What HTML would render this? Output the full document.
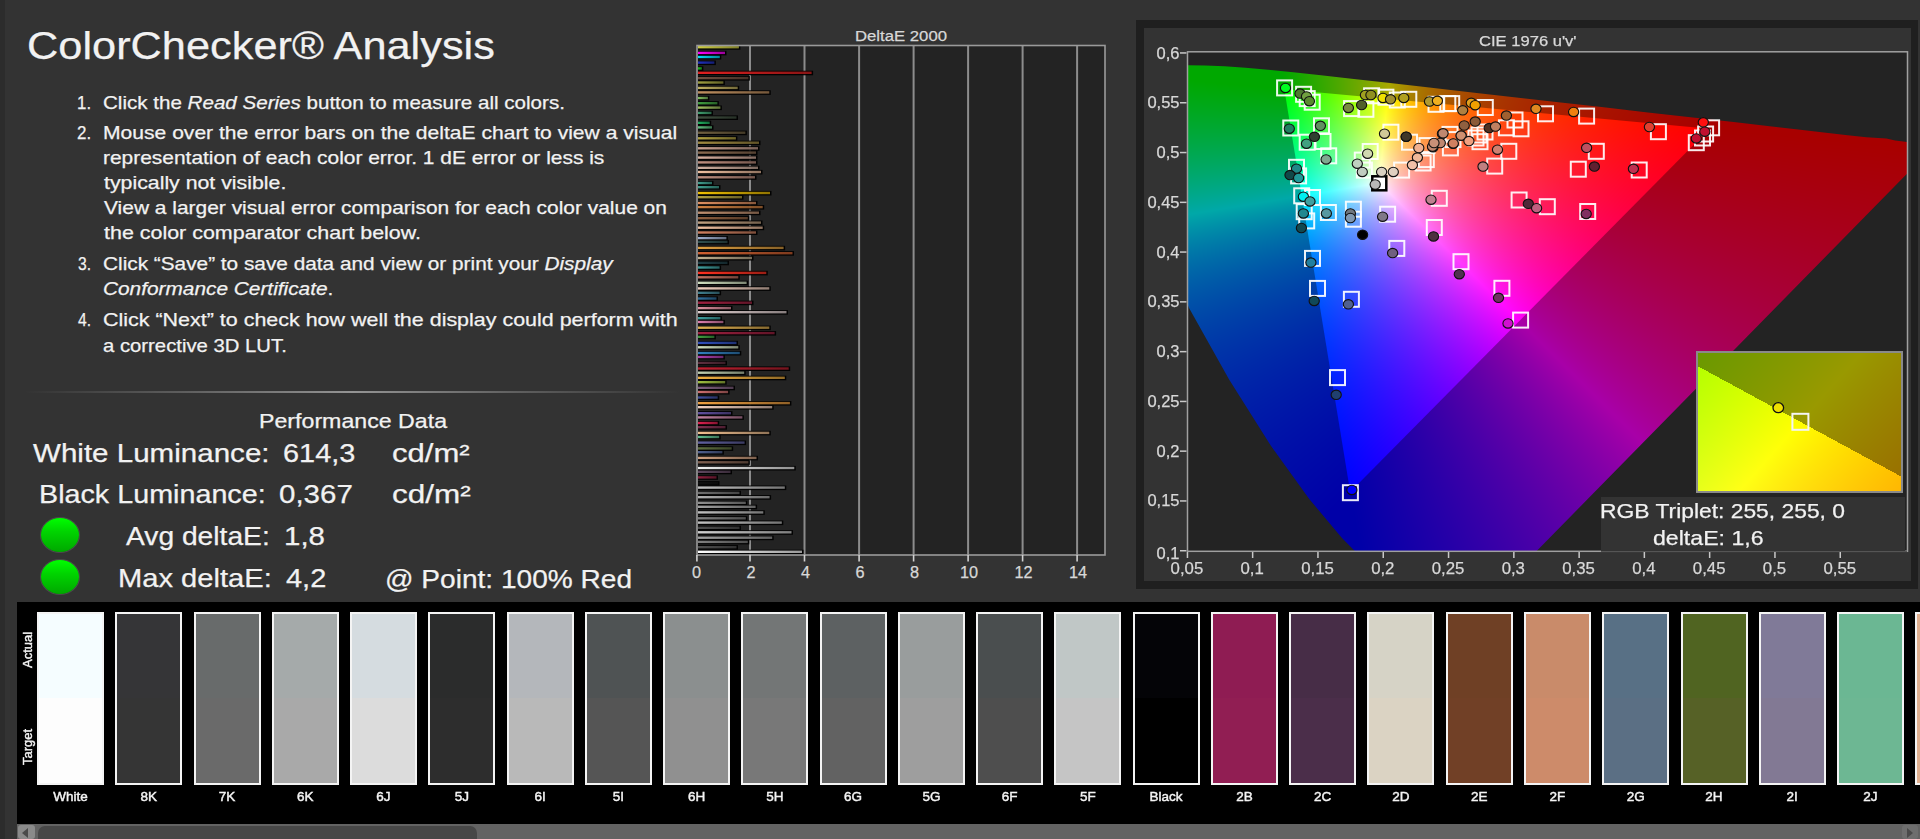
<!DOCTYPE html>
<html><head><meta charset="utf-8"><title>ColorChecker Analysis</title>
<style>
html,body{margin:0;padding:0;}
body{width:1920px;height:839px;overflow:hidden;background:#333333;position:relative;font-family:"Liberation Sans", sans-serif;}
.abs{position:absolute;}
.t{position:absolute;white-space:nowrap;line-height:normal;transform-origin:0 0;-webkit-text-stroke:0.25px currentColor;}
.t.c{text-align:center;transform-origin:50% 0;}
.t.r{text-align:right;transform-origin:100% 0;}
.sw{position:absolute;top:612px;width:63px;height:169px;border:2px solid #f4f4f4;}
.swl{width:80px;font-size:13.5px;font-weight:normal;color:#f4f4f4;-webkit-text-stroke:0.45px #f4f4f4;}
</style></head>
<body>
<div class="abs" style="left:0;top:0;width:5px;height:839px;background:#2c2c2c"></div>
<div class="abs" style="left:25px;top:391px;width:655px;height:2px;background:linear-gradient(90deg,rgba(150,150,150,0),rgba(150,150,150,.45) 25%,rgba(165,165,165,.85) 50%,rgba(150,150,150,.45) 75%,rgba(150,150,150,0))"></div>
<div id="title" class="t" style="left:27.0px;top:23.6px;font-size:39px;color:#f2f2f2;transform:scaleX(1.1112);">ColorChecker® Analysis</div>
<div id="num1." class="t" style="left:77.4px;top:91.8px;font-size:19px;color:#f2f2f2;transform:scaleX(0.8882);">1.</div>
<div id="num2." class="t" style="left:77.4px;top:122.3px;font-size:19px;color:#f2f2f2;transform:scaleX(0.8935);">2.</div>
<div id="num3." class="t" style="left:78.4px;top:252.8px;font-size:19px;color:#f2f2f2;transform:scaleX(0.8247);">3.</div>
<div id="num4." class="t" style="left:78.4px;top:309.1px;font-size:19px;color:#f2f2f2;transform:scaleX(0.8247);">4.</div>
<div id="l1" class="t" style="left:103.0px;top:91.8px;font-size:19px;color:#f2f2f2;transform:scaleX(1.0826);">Click the <i>Read Series</i> button to measure all colors.</div>
<div id="l2" class="t" style="left:103.0px;top:122.3px;font-size:19px;color:#f2f2f2;transform:scaleX(1.1095);">Mouse over the error bars on the deltaE chart to view a visual</div>
<div id="l3" class="t" style="left:103.0px;top:147.3px;font-size:19px;color:#f2f2f2;transform:scaleX(1.1013);">representation of each color error. 1 dE error or less is</div>
<div id="l4" class="t" style="left:104.0px;top:172.1px;font-size:19px;color:#f2f2f2;transform:scaleX(1.1211);">typically not visible.</div>
<div id="l5" class="t" style="left:104.0px;top:197.4px;font-size:19px;color:#f2f2f2;transform:scaleX(1.1020);">View a larger visual error comparison for each color value on</div>
<div id="l6" class="t" style="left:104.0px;top:222.0px;font-size:19px;color:#f2f2f2;transform:scaleX(1.1286);">the color comparator chart below.</div>
<div id="l7" class="t" style="left:103.0px;top:252.7px;font-size:19px;color:#f2f2f2;transform:scaleX(1.0944);">Click “Save” to save data and view or print your <i>Display</i></div>
<div id="l8" class="t" style="left:103.0px;top:278.0px;font-size:19px;color:#f2f2f2;transform:scaleX(1.0962);"><i>Conformance Certificate</i>.</div>
<div id="l9" class="t" style="left:103.0px;top:309.1px;font-size:19px;color:#f2f2f2;transform:scaleX(1.1292);">Click “Next” to check how well the display could perform with</div>
<div id="l10" class="t" style="left:103.0px;top:334.5px;font-size:19px;color:#f2f2f2;transform:scaleX(1.0677);">a corrective 3D LUT.</div>
<div id="perf" class="t" style="left:258.6px;top:409.2px;font-size:20.5px;color:#f2f2f2;transform:scaleX(1.1303);">Performance Data</div>
<div id="wl" class="t" style="left:33.4px;top:437.5px;font-size:26px;color:#f2f2f2;transform:scaleX(1.1366);">White Luminance:</div>
<div id="wlv" class="t" style="left:283.4px;top:437.5px;font-size:26px;color:#f2f2f2;transform:scaleX(1.1112);">614,3</div>
<div id="wlu" class="t" style="left:392.0px;top:437.5px;font-size:26px;color:#f2f2f2;transform:scaleX(1.1954);">cd/m²</div>
<div id="bl" class="t" style="left:39.2px;top:479.3px;font-size:26px;color:#f2f2f2;transform:scaleX(1.1045);">Black Luminance:</div>
<div id="blv" class="t" style="left:278.8px;top:479.3px;font-size:26px;color:#f2f2f2;transform:scaleX(1.1350);">0,367</div>
<div id="blu" class="t" style="left:391.8px;top:479.1px;font-size:26px;color:#f2f2f2;transform:scaleX(1.2110);">cd/m²</div>
<div id="avg" class="t" style="left:126.0px;top:520.9px;font-size:26px;color:#f2f2f2;transform:scaleX(1.0846);">Avg deltaE:</div>
<div id="avgv" class="t" style="left:283.6px;top:520.9px;font-size:26px;color:#f2f2f2;transform:scaleX(1.1332);">1,8</div>
<div id="max" class="t" style="left:118.0px;top:563.2px;font-size:26px;color:#f2f2f2;transform:scaleX(1.1203);">Max deltaE:</div>
<div id="maxv" class="t" style="left:286.0px;top:563.2px;font-size:26px;color:#f2f2f2;transform:scaleX(1.1143);">4,2</div>
<div id="pt" class="t" style="left:384.8px;top:563.5px;font-size:26px;color:#f2f2f2;transform:scaleX(1.0800);">@ Point: 100% Red</div>
<div id="de_title" class="t" style="left:855.0px;top:27.0px;font-size:15.5px;color:#d8d8d8;transform:scaleX(1.0784);">DeltaE 2000</div>
<div class="abs" style="left:41px;top:518px;width:38px;height:34px;border-radius:50%;background:linear-gradient(180deg,#00ff00 0%,#00d400 40%,#00a800 100%);box-shadow:0 0 0 1px rgba(120,120,120,.35)"></div>
<div class="abs" style="left:41px;top:560px;width:38px;height:34px;border-radius:50%;background:linear-gradient(180deg,#00ff00 0%,#00d400 40%,#00a800 100%);box-shadow:0 0 0 1px rgba(120,120,120,.35)"></div>
<svg class="abs" style="left:0;top:0" width="1920" height="839">
<defs>
<linearGradient id="bg0" x1="0" x2="1" y1="0" y2="0"><stop offset="0" stop-color="#d0d040"/><stop offset="1" stop-color="#d0d040" stop-opacity="0.6"/></linearGradient>
<linearGradient id="bg1" x1="0" x2="1" y1="0" y2="0"><stop offset="0" stop-color="#ff00ff"/><stop offset="1" stop-color="#ff00ff" stop-opacity="0.6"/></linearGradient>
<linearGradient id="bg2" x1="0" x2="1" y1="0" y2="0"><stop offset="0" stop-color="#00e0ff"/><stop offset="1" stop-color="#00e0ff" stop-opacity="0.6"/></linearGradient>
<linearGradient id="bg3" x1="0" x2="1" y1="0" y2="0"><stop offset="0" stop-color="#2030c0"/><stop offset="1" stop-color="#2030c0" stop-opacity="0.6"/></linearGradient>
<linearGradient id="bg4" x1="0" x2="1" y1="0" y2="0"><stop offset="0" stop-color="#20c020"/><stop offset="1" stop-color="#20c020" stop-opacity="0.6"/></linearGradient>
<linearGradient id="bg5" x1="0" x2="1" y1="0" y2="0"><stop offset="0" stop-color="#e02020"/><stop offset="1" stop-color="#e02020" stop-opacity="0.6"/></linearGradient>
<linearGradient id="bg6" x1="0" x2="1" y1="0" y2="0"><stop offset="0" stop-color="#705040"/><stop offset="1" stop-color="#705040" stop-opacity="0.6"/></linearGradient>
<linearGradient id="bg7" x1="0" x2="1" y1="0" y2="0"><stop offset="0" stop-color="#a0a040"/><stop offset="1" stop-color="#a0a040" stop-opacity="0.6"/></linearGradient>
<linearGradient id="bg8" x1="0" x2="1" y1="0" y2="0"><stop offset="0" stop-color="#c0b060"/><stop offset="1" stop-color="#c0b060" stop-opacity="0.6"/></linearGradient>
<linearGradient id="bg9" x1="0" x2="1" y1="0" y2="0"><stop offset="0" stop-color="#c09060"/><stop offset="1" stop-color="#c09060" stop-opacity="0.6"/></linearGradient>
<linearGradient id="bg10" x1="0" x2="1" y1="0" y2="0"><stop offset="0" stop-color="#80c060"/><stop offset="1" stop-color="#80c060" stop-opacity="0.6"/></linearGradient>
<linearGradient id="bg11" x1="0" x2="1" y1="0" y2="0"><stop offset="0" stop-color="#40a040"/><stop offset="1" stop-color="#40a040" stop-opacity="0.6"/></linearGradient>
<linearGradient id="bg12" x1="0" x2="1" y1="0" y2="0"><stop offset="0" stop-color="#a0c060"/><stop offset="1" stop-color="#a0c060" stop-opacity="0.6"/></linearGradient>
<linearGradient id="bg13" x1="0" x2="1" y1="0" y2="0"><stop offset="0" stop-color="#40a070"/><stop offset="1" stop-color="#40a070" stop-opacity="0.6"/></linearGradient>
<linearGradient id="bg14" x1="0" x2="1" y1="0" y2="0"><stop offset="0" stop-color="#405040"/><stop offset="1" stop-color="#405040" stop-opacity="0.6"/></linearGradient>
<linearGradient id="bg15" x1="0" x2="1" y1="0" y2="0"><stop offset="0" stop-color="#20b060"/><stop offset="1" stop-color="#20b060" stop-opacity="0.6"/></linearGradient>
<linearGradient id="bg16" x1="0" x2="1" y1="0" y2="0"><stop offset="0" stop-color="#60c080"/><stop offset="1" stop-color="#60c080" stop-opacity="0.6"/></linearGradient>
<linearGradient id="bg17" x1="0" x2="1" y1="0" y2="0"><stop offset="0" stop-color="#706040"/><stop offset="1" stop-color="#706040" stop-opacity="0.6"/></linearGradient>
<linearGradient id="bg18" x1="0" x2="1" y1="0" y2="0"><stop offset="0" stop-color="#b0a040"/><stop offset="1" stop-color="#b0a040" stop-opacity="0.6"/></linearGradient>
<linearGradient id="bg19" x1="0" x2="1" y1="0" y2="0"><stop offset="0" stop-color="#a08a40"/><stop offset="1" stop-color="#a08a40" stop-opacity="0.6"/></linearGradient>
<linearGradient id="bg20" x1="0" x2="1" y1="0" y2="0"><stop offset="0" stop-color="#c8a090"/><stop offset="1" stop-color="#c8a090" stop-opacity="0.6"/></linearGradient>
<linearGradient id="bg21" x1="0" x2="1" y1="0" y2="0"><stop offset="0" stop-color="#8a6a50"/><stop offset="1" stop-color="#8a6a50" stop-opacity="0.6"/></linearGradient>
<linearGradient id="bg22" x1="0" x2="1" y1="0" y2="0"><stop offset="0" stop-color="#d8b0a0"/><stop offset="1" stop-color="#d8b0a0" stop-opacity="0.6"/></linearGradient>
<linearGradient id="bg23" x1="0" x2="1" y1="0" y2="0"><stop offset="0" stop-color="#c09080"/><stop offset="1" stop-color="#c09080" stop-opacity="0.6"/></linearGradient>
<linearGradient id="bg24" x1="0" x2="1" y1="0" y2="0"><stop offset="0" stop-color="#d0b0a0"/><stop offset="1" stop-color="#d0b0a0" stop-opacity="0.6"/></linearGradient>
<linearGradient id="bg25" x1="0" x2="1" y1="0" y2="0"><stop offset="0" stop-color="#f0c0a0"/><stop offset="1" stop-color="#f0c0a0" stop-opacity="0.6"/></linearGradient>
<linearGradient id="bg26" x1="0" x2="1" y1="0" y2="0"><stop offset="0" stop-color="#c09080"/><stop offset="1" stop-color="#c09080" stop-opacity="0.6"/></linearGradient>
<linearGradient id="bg27" x1="0" x2="1" y1="0" y2="0"><stop offset="0" stop-color="#40a090"/><stop offset="1" stop-color="#40a090" stop-opacity="0.6"/></linearGradient>
<linearGradient id="bg28" x1="0" x2="1" y1="0" y2="0"><stop offset="0" stop-color="#40a090"/><stop offset="1" stop-color="#40a090" stop-opacity="0.6"/></linearGradient>
<linearGradient id="bg29" x1="0" x2="1" y1="0" y2="0"><stop offset="0" stop-color="#f0c000"/><stop offset="1" stop-color="#f0c000" stop-opacity="0.6"/></linearGradient>
<linearGradient id="bg30" x1="0" x2="1" y1="0" y2="0"><stop offset="0" stop-color="#b0a040"/><stop offset="1" stop-color="#b0a040" stop-opacity="0.6"/></linearGradient>
<linearGradient id="bg31" x1="0" x2="1" y1="0" y2="0"><stop offset="0" stop-color="#e09060"/><stop offset="1" stop-color="#e09060" stop-opacity="0.6"/></linearGradient>
<linearGradient id="bg32" x1="0" x2="1" y1="0" y2="0"><stop offset="0" stop-color="#d08040"/><stop offset="1" stop-color="#d08040" stop-opacity="0.6"/></linearGradient>
<linearGradient id="bg33" x1="0" x2="1" y1="0" y2="0"><stop offset="0" stop-color="#c09070"/><stop offset="1" stop-color="#c09070" stop-opacity="0.6"/></linearGradient>
<linearGradient id="bg34" x1="0" x2="1" y1="0" y2="0"><stop offset="0" stop-color="#906040"/><stop offset="1" stop-color="#906040" stop-opacity="0.6"/></linearGradient>
<linearGradient id="bg35" x1="0" x2="1" y1="0" y2="0"><stop offset="0" stop-color="#c0a080"/><stop offset="1" stop-color="#c0a080" stop-opacity="0.6"/></linearGradient>
<linearGradient id="bg36" x1="0" x2="1" y1="0" y2="0"><stop offset="0" stop-color="#f0c0a0"/><stop offset="1" stop-color="#f0c0a0" stop-opacity="0.6"/></linearGradient>
<linearGradient id="bg37" x1="0" x2="1" y1="0" y2="0"><stop offset="0" stop-color="#d08060"/><stop offset="1" stop-color="#d08060" stop-opacity="0.6"/></linearGradient>
<linearGradient id="bg38" x1="0" x2="1" y1="0" y2="0"><stop offset="0" stop-color="#a0b0d0"/><stop offset="1" stop-color="#a0b0d0" stop-opacity="0.6"/></linearGradient>
<linearGradient id="bg39" x1="0" x2="1" y1="0" y2="0"><stop offset="0" stop-color="#305050"/><stop offset="1" stop-color="#305050" stop-opacity="0.6"/></linearGradient>
<linearGradient id="bg40" x1="0" x2="1" y1="0" y2="0"><stop offset="0" stop-color="#e0a040"/><stop offset="1" stop-color="#e0a040" stop-opacity="0.6"/></linearGradient>
<linearGradient id="bg41" x1="0" x2="1" y1="0" y2="0"><stop offset="0" stop-color="#d06030"/><stop offset="1" stop-color="#d06030" stop-opacity="0.6"/></linearGradient>
<linearGradient id="bg42" x1="0" x2="1" y1="0" y2="0"><stop offset="0" stop-color="#c0b090"/><stop offset="1" stop-color="#c0b090" stop-opacity="0.6"/></linearGradient>
<linearGradient id="bg43" x1="0" x2="1" y1="0" y2="0"><stop offset="0" stop-color="#204048"/><stop offset="1" stop-color="#204048" stop-opacity="0.6"/></linearGradient>
<linearGradient id="bg44" x1="0" x2="1" y1="0" y2="0"><stop offset="0" stop-color="#40a0a0"/><stop offset="1" stop-color="#40a0a0" stop-opacity="0.6"/></linearGradient>
<linearGradient id="bg45" x1="0" x2="1" y1="0" y2="0"><stop offset="0" stop-color="#ff3020"/><stop offset="1" stop-color="#ff3020" stop-opacity="0.6"/></linearGradient>
<linearGradient id="bg46" x1="0" x2="1" y1="0" y2="0"><stop offset="0" stop-color="#c07060"/><stop offset="1" stop-color="#c07060" stop-opacity="0.6"/></linearGradient>
<linearGradient id="bg47" x1="0" x2="1" y1="0" y2="0"><stop offset="0" stop-color="#d0e0c0"/><stop offset="1" stop-color="#d0e0c0" stop-opacity="0.6"/></linearGradient>
<linearGradient id="bg48" x1="0" x2="1" y1="0" y2="0"><stop offset="0" stop-color="#f0d0c0"/><stop offset="1" stop-color="#f0d0c0" stop-opacity="0.6"/></linearGradient>
<linearGradient id="bg49" x1="0" x2="1" y1="0" y2="0"><stop offset="0" stop-color="#408090"/><stop offset="1" stop-color="#408090" stop-opacity="0.6"/></linearGradient>
<linearGradient id="bg50" x1="0" x2="1" y1="0" y2="0"><stop offset="0" stop-color="#3070a0"/><stop offset="1" stop-color="#3070a0" stop-opacity="0.6"/></linearGradient>
<linearGradient id="bg51" x1="0" x2="1" y1="0" y2="0"><stop offset="0" stop-color="#a02040"/><stop offset="1" stop-color="#a02040" stop-opacity="0.6"/></linearGradient>
<linearGradient id="bg52" x1="0" x2="1" y1="0" y2="0"><stop offset="0" stop-color="#e090a0"/><stop offset="1" stop-color="#e090a0" stop-opacity="0.6"/></linearGradient>
<linearGradient id="bg53" x1="0" x2="1" y1="0" y2="0"><stop offset="0" stop-color="#e0d0d0"/><stop offset="1" stop-color="#e0d0d0" stop-opacity="0.6"/></linearGradient>
<linearGradient id="bg54" x1="0" x2="1" y1="0" y2="0"><stop offset="0" stop-color="#40a0a0"/><stop offset="1" stop-color="#40a0a0" stop-opacity="0.6"/></linearGradient>
<linearGradient id="bg55" x1="0" x2="1" y1="0" y2="0"><stop offset="0" stop-color="#e080b0"/><stop offset="1" stop-color="#e080b0" stop-opacity="0.6"/></linearGradient>
<linearGradient id="bg56" x1="0" x2="1" y1="0" y2="0"><stop offset="0" stop-color="#e0b050"/><stop offset="1" stop-color="#e0b050" stop-opacity="0.6"/></linearGradient>
<linearGradient id="bg57" x1="0" x2="1" y1="0" y2="0"><stop offset="0" stop-color="#a02040"/><stop offset="1" stop-color="#a02040" stop-opacity="0.6"/></linearGradient>
<linearGradient id="bg58" x1="0" x2="1" y1="0" y2="0"><stop offset="0" stop-color="#40a040"/><stop offset="1" stop-color="#40a040" stop-opacity="0.6"/></linearGradient>
<linearGradient id="bg59" x1="0" x2="1" y1="0" y2="0"><stop offset="0" stop-color="#3050c0"/><stop offset="1" stop-color="#3050c0" stop-opacity="0.6"/></linearGradient>
<linearGradient id="bg60" x1="0" x2="1" y1="0" y2="0"><stop offset="0" stop-color="#d0e0c0"/><stop offset="1" stop-color="#d0e0c0" stop-opacity="0.6"/></linearGradient>
<linearGradient id="bg61" x1="0" x2="1" y1="0" y2="0"><stop offset="0" stop-color="#3080c0"/><stop offset="1" stop-color="#3080c0" stop-opacity="0.6"/></linearGradient>
<linearGradient id="bg62" x1="0" x2="1" y1="0" y2="0"><stop offset="0" stop-color="#b040b0"/><stop offset="1" stop-color="#b040b0" stop-opacity="0.6"/></linearGradient>
<linearGradient id="bg63" x1="0" x2="1" y1="0" y2="0"><stop offset="0" stop-color="#603040"/><stop offset="1" stop-color="#603040" stop-opacity="0.6"/></linearGradient>
<linearGradient id="bg64" x1="0" x2="1" y1="0" y2="0"><stop offset="0" stop-color="#c02030"/><stop offset="1" stop-color="#c02030" stop-opacity="0.6"/></linearGradient>
<linearGradient id="bg65" x1="0" x2="1" y1="0" y2="0"><stop offset="0" stop-color="#c0d0b0"/><stop offset="1" stop-color="#c0d0b0" stop-opacity="0.6"/></linearGradient>
<linearGradient id="bg66" x1="0" x2="1" y1="0" y2="0"><stop offset="0" stop-color="#f0b040"/><stop offset="1" stop-color="#f0b040" stop-opacity="0.6"/></linearGradient>
<linearGradient id="bg67" x1="0" x2="1" y1="0" y2="0"><stop offset="0" stop-color="#a0c040"/><stop offset="1" stop-color="#a0c040" stop-opacity="0.6"/></linearGradient>
<linearGradient id="bg68" x1="0" x2="1" y1="0" y2="0"><stop offset="0" stop-color="#806080"/><stop offset="1" stop-color="#806080" stop-opacity="0.6"/></linearGradient>
<linearGradient id="bg69" x1="0" x2="1" y1="0" y2="0"><stop offset="0" stop-color="#d07070"/><stop offset="1" stop-color="#d07070" stop-opacity="0.6"/></linearGradient>
<linearGradient id="bg70" x1="0" x2="1" y1="0" y2="0"><stop offset="0" stop-color="#4050a0"/><stop offset="1" stop-color="#4050a0" stop-opacity="0.6"/></linearGradient>
<linearGradient id="bg71" x1="0" x2="1" y1="0" y2="0"><stop offset="0" stop-color="#f0a040"/><stop offset="1" stop-color="#f0a040" stop-opacity="0.6"/></linearGradient>
<linearGradient id="bg72" x1="0" x2="1" y1="0" y2="0"><stop offset="0" stop-color="#f0d0c0"/><stop offset="1" stop-color="#f0d0c0" stop-opacity="0.6"/></linearGradient>
<linearGradient id="bg73" x1="0" x2="1" y1="0" y2="0"><stop offset="0" stop-color="#6050a0"/><stop offset="1" stop-color="#6050a0" stop-opacity="0.6"/></linearGradient>
<linearGradient id="bg74" x1="0" x2="1" y1="0" y2="0"><stop offset="0" stop-color="#c080a0"/><stop offset="1" stop-color="#c080a0" stop-opacity="0.6"/></linearGradient>
<linearGradient id="bg75" x1="0" x2="1" y1="0" y2="0"><stop offset="0" stop-color="#e02050"/><stop offset="1" stop-color="#e02050" stop-opacity="0.6"/></linearGradient>
<linearGradient id="bg76" x1="0" x2="1" y1="0" y2="0"><stop offset="0" stop-color="#803050"/><stop offset="1" stop-color="#803050" stop-opacity="0.6"/></linearGradient>
<linearGradient id="bg77" x1="0" x2="1" y1="0" y2="0"><stop offset="0" stop-color="#f0c090"/><stop offset="1" stop-color="#f0c090" stop-opacity="0.6"/></linearGradient>
<linearGradient id="bg78" x1="0" x2="1" y1="0" y2="0"><stop offset="0" stop-color="#60c090"/><stop offset="1" stop-color="#60c090" stop-opacity="0.6"/></linearGradient>
<linearGradient id="bg79" x1="0" x2="1" y1="0" y2="0"><stop offset="0" stop-color="#6060a0"/><stop offset="1" stop-color="#6060a0" stop-opacity="0.6"/></linearGradient>
<linearGradient id="bg80" x1="0" x2="1" y1="0" y2="0"><stop offset="0" stop-color="#607040"/><stop offset="1" stop-color="#607040" stop-opacity="0.6"/></linearGradient>
<linearGradient id="bg81" x1="0" x2="1" y1="0" y2="0"><stop offset="0" stop-color="#506090"/><stop offset="1" stop-color="#506090" stop-opacity="0.6"/></linearGradient>
<linearGradient id="bg82" x1="0" x2="1" y1="0" y2="0"><stop offset="0" stop-color="#d0a080"/><stop offset="1" stop-color="#d0a080" stop-opacity="0.6"/></linearGradient>
<linearGradient id="bg83" x1="0" x2="1" y1="0" y2="0"><stop offset="0" stop-color="#806050"/><stop offset="1" stop-color="#806050" stop-opacity="0.6"/></linearGradient>
<linearGradient id="bg84" x1="0" x2="1" y1="0" y2="0"><stop offset="0" stop-color="#f0f0f0"/><stop offset="1" stop-color="#f0f0f0" stop-opacity="0.6"/></linearGradient>
<linearGradient id="bg85" x1="0" x2="1" y1="0" y2="0"><stop offset="0" stop-color="#604860"/><stop offset="1" stop-color="#604860" stop-opacity="0.6"/></linearGradient>
<linearGradient id="bg86" x1="0" x2="1" y1="0" y2="0"><stop offset="0" stop-color="#902040"/><stop offset="1" stop-color="#902040" stop-opacity="0.6"/></linearGradient>
<linearGradient id="bg87" x1="0" x2="1" y1="0" y2="0"><stop offset="0" stop-color="#101010"/><stop offset="1" stop-color="#101010" stop-opacity="0.6"/></linearGradient>
<linearGradient id="bg88" x1="0" x2="1" y1="0" y2="0"><stop offset="0" stop-color="#c0c0c0"/><stop offset="1" stop-color="#c0c0c0" stop-opacity="0.6"/></linearGradient>
<linearGradient id="bg89" x1="0" x2="1" y1="0" y2="0"><stop offset="0" stop-color="#707070"/><stop offset="1" stop-color="#707070" stop-opacity="0.6"/></linearGradient>
<linearGradient id="bg90" x1="0" x2="1" y1="0" y2="0"><stop offset="0" stop-color="#b0b0b0"/><stop offset="1" stop-color="#b0b0b0" stop-opacity="0.6"/></linearGradient>
<linearGradient id="bg91" x1="0" x2="1" y1="0" y2="0"><stop offset="0" stop-color="#909090"/><stop offset="1" stop-color="#909090" stop-opacity="0.6"/></linearGradient>
<linearGradient id="bg92" x1="0" x2="1" y1="0" y2="0"><stop offset="0" stop-color="#a0a0a0"/><stop offset="1" stop-color="#a0a0a0" stop-opacity="0.6"/></linearGradient>
<linearGradient id="bg93" x1="0" x2="1" y1="0" y2="0"><stop offset="0" stop-color="#c0c0c0"/><stop offset="1" stop-color="#c0c0c0" stop-opacity="0.6"/></linearGradient>
<linearGradient id="bg94" x1="0" x2="1" y1="0" y2="0"><stop offset="0" stop-color="#808080"/><stop offset="1" stop-color="#808080" stop-opacity="0.6"/></linearGradient>
<linearGradient id="bg95" x1="0" x2="1" y1="0" y2="0"><stop offset="0" stop-color="#c0c0c0"/><stop offset="1" stop-color="#c0c0c0" stop-opacity="0.6"/></linearGradient>
<linearGradient id="bg96" x1="0" x2="1" y1="0" y2="0"><stop offset="0" stop-color="#505050"/><stop offset="1" stop-color="#505050" stop-opacity="0.6"/></linearGradient>
<linearGradient id="bg97" x1="0" x2="1" y1="0" y2="0"><stop offset="0" stop-color="#d0d0d0"/><stop offset="1" stop-color="#d0d0d0" stop-opacity="0.6"/></linearGradient>
<linearGradient id="bg98" x1="0" x2="1" y1="0" y2="0"><stop offset="0" stop-color="#a0a0a0"/><stop offset="1" stop-color="#a0a0a0" stop-opacity="0.6"/></linearGradient>
<linearGradient id="bg99" x1="0" x2="1" y1="0" y2="0"><stop offset="0" stop-color="#808080"/><stop offset="1" stop-color="#808080" stop-opacity="0.6"/></linearGradient>
<linearGradient id="bg100" x1="0" x2="1" y1="0" y2="0"><stop offset="0" stop-color="#505050"/><stop offset="1" stop-color="#505050" stop-opacity="0.6"/></linearGradient>
<linearGradient id="bg101" x1="0" x2="1" y1="0" y2="0"><stop offset="0" stop-color="#ffffff"/><stop offset="1" stop-color="#ffffff" stop-opacity="0.6"/></linearGradient>
</defs>
<rect x="697" y="45" width="408" height="510" fill="#232323"/>
<rect x="749.0" y="45" width="2" height="510" fill="#8c8c8c"/>
<rect x="803.5" y="45" width="2" height="510" fill="#8c8c8c"/>
<rect x="858.1" y="45" width="2" height="510" fill="#8c8c8c"/>
<rect x="912.6" y="45" width="2" height="510" fill="#8c8c8c"/>
<rect x="967.1" y="45" width="2" height="510" fill="#8c8c8c"/>
<rect x="1021.6" y="45" width="2" height="510" fill="#8c8c8c"/>
<rect x="1076.1" y="45" width="2" height="510" fill="#8c8c8c"/>
<rect x="698" y="45.1" width="42.4" height="4.6" fill="#000" fill-opacity="0.92"/>
<rect x="698" y="50.8" width="28.5" height="4.6" fill="#000" fill-opacity="0.92"/>
<rect x="698" y="54.9" width="23.3" height="4.6" fill="#000" fill-opacity="0.92"/>
<rect x="698" y="60.5" width="17.9" height="4.6" fill="#000" fill-opacity="0.92"/>
<rect x="698" y="66.3" width="5.4" height="4.6" fill="#000" fill-opacity="0.92"/>
<rect x="698" y="70.7" width="115.1" height="4.6" fill="#000" fill-opacity="0.92"/>
<rect x="698" y="76.0" width="51.9" height="4.6" fill="#000" fill-opacity="0.92"/>
<rect x="698" y="80.4" width="26.9" height="4.6" fill="#000" fill-opacity="0.92"/>
<rect x="698" y="85.8" width="41.2" height="4.6" fill="#000" fill-opacity="0.92"/>
<rect x="698" y="90.3" width="72.8" height="4.6" fill="#000" fill-opacity="0.92"/>
<rect x="698" y="95.9" width="11.4" height="4.6" fill="#000" fill-opacity="0.92"/>
<rect x="698" y="101.1" width="20.9" height="4.6" fill="#000" fill-opacity="0.92"/>
<rect x="698" y="105.5" width="23.9" height="4.6" fill="#000" fill-opacity="0.92"/>
<rect x="698" y="110.8" width="15.0" height="4.6" fill="#000" fill-opacity="0.92"/>
<rect x="698" y="115.4" width="40.0" height="4.6" fill="#000" fill-opacity="0.92"/>
<rect x="698" y="120.7" width="13.2" height="4.6" fill="#000" fill-opacity="0.92"/>
<rect x="698" y="125.3" width="15.5" height="4.6" fill="#000" fill-opacity="0.92"/>
<rect x="698" y="130.6" width="48.9" height="4.6" fill="#000" fill-opacity="0.92"/>
<rect x="698" y="136.2" width="39.4" height="4.6" fill="#000" fill-opacity="0.92"/>
<rect x="698" y="140.6" width="62.5" height="4.6" fill="#000" fill-opacity="0.92"/>
<rect x="698" y="146.2" width="61.5" height="4.6" fill="#000" fill-opacity="0.92"/>
<rect x="698" y="150.5" width="59.5" height="4.6" fill="#000" fill-opacity="0.92"/>
<rect x="698" y="155.5" width="59.5" height="4.6" fill="#000" fill-opacity="0.92"/>
<rect x="698" y="160.3" width="59.5" height="4.6" fill="#000" fill-opacity="0.92"/>
<rect x="698" y="165.7" width="61.5" height="4.6" fill="#000" fill-opacity="0.92"/>
<rect x="698" y="169.9" width="64.5" height="4.6" fill="#000" fill-opacity="0.92"/>
<rect x="698" y="175.2" width="58.5" height="4.6" fill="#000" fill-opacity="0.92"/>
<rect x="698" y="180.9" width="15.5" height="4.6" fill="#000" fill-opacity="0.92"/>
<rect x="698" y="185.1" width="22.5" height="4.6" fill="#000" fill-opacity="0.92"/>
<rect x="698" y="190.9" width="73.5" height="4.6" fill="#000" fill-opacity="0.92"/>
<rect x="698" y="195.1" width="45.5" height="4.6" fill="#000" fill-opacity="0.92"/>
<rect x="698" y="200.9" width="59.5" height="4.6" fill="#000" fill-opacity="0.92"/>
<rect x="698" y="205.0" width="66.2" height="4.6" fill="#000" fill-opacity="0.92"/>
<rect x="698" y="210.6" width="62.5" height="4.6" fill="#000" fill-opacity="0.92"/>
<rect x="698" y="216.1" width="51.3" height="4.6" fill="#000" fill-opacity="0.92"/>
<rect x="698" y="220.5" width="64.5" height="4.6" fill="#000" fill-opacity="0.92"/>
<rect x="698" y="225.6" width="66.2" height="4.6" fill="#000" fill-opacity="0.92"/>
<rect x="698" y="230.4" width="59.5" height="4.6" fill="#000" fill-opacity="0.92"/>
<rect x="698" y="236.0" width="29.9" height="4.6" fill="#000" fill-opacity="0.92"/>
<rect x="698" y="239.8" width="31.0" height="4.6" fill="#000" fill-opacity="0.92"/>
<rect x="698" y="245.8" width="87.1" height="4.6" fill="#000" fill-opacity="0.92"/>
<rect x="698" y="251.1" width="96.0" height="4.6" fill="#000" fill-opacity="0.92"/>
<rect x="698" y="255.9" width="55.5" height="4.6" fill="#000" fill-opacity="0.92"/>
<rect x="698" y="260.7" width="31.0" height="4.6" fill="#000" fill-opacity="0.92"/>
<rect x="698" y="265.4" width="23.1" height="4.6" fill="#000" fill-opacity="0.92"/>
<rect x="698" y="270.8" width="69.8" height="4.6" fill="#000" fill-opacity="0.92"/>
<rect x="698" y="275.2" width="41.8" height="4.6" fill="#000" fill-opacity="0.92"/>
<rect x="698" y="280.7" width="50.1" height="4.6" fill="#000" fill-opacity="0.92"/>
<rect x="698" y="286.3" width="72.8" height="4.6" fill="#000" fill-opacity="0.92"/>
<rect x="698" y="290.7" width="23.1" height="4.6" fill="#000" fill-opacity="0.92"/>
<rect x="698" y="296.4" width="20.0" height="4.6" fill="#000" fill-opacity="0.92"/>
<rect x="698" y="300.6" width="55.5" height="4.6" fill="#000" fill-opacity="0.92"/>
<rect x="698" y="306.0" width="34.5" height="4.6" fill="#000" fill-opacity="0.92"/>
<rect x="698" y="310.1" width="90.0" height="4.6" fill="#000" fill-opacity="0.92"/>
<rect x="698" y="316.1" width="23.9" height="4.6" fill="#000" fill-opacity="0.92"/>
<rect x="698" y="319.9" width="26.9" height="4.6" fill="#000" fill-opacity="0.92"/>
<rect x="698" y="325.6" width="72.8" height="4.6" fill="#000" fill-opacity="0.92"/>
<rect x="698" y="331.0" width="78.1" height="4.6" fill="#000" fill-opacity="0.92"/>
<rect x="698" y="334.8" width="17.9" height="4.6" fill="#000" fill-opacity="0.92"/>
<rect x="698" y="340.8" width="40.0" height="4.6" fill="#000" fill-opacity="0.92"/>
<rect x="698" y="345.2" width="41.8" height="4.6" fill="#000" fill-opacity="0.92"/>
<rect x="698" y="350.9" width="43.3" height="4.6" fill="#000" fill-opacity="0.92"/>
<rect x="698" y="354.9" width="26.9" height="4.6" fill="#000" fill-opacity="0.92"/>
<rect x="698" y="360.8" width="29.0" height="4.6" fill="#000" fill-opacity="0.92"/>
<rect x="698" y="366.4" width="92.2" height="4.6" fill="#000" fill-opacity="0.92"/>
<rect x="698" y="370.6" width="47.7" height="4.6" fill="#000" fill-opacity="0.92"/>
<rect x="698" y="375.7" width="88.3" height="4.6" fill="#000" fill-opacity="0.92"/>
<rect x="698" y="380.1" width="28.7" height="4.6" fill="#000" fill-opacity="0.92"/>
<rect x="698" y="385.7" width="37.0" height="4.6" fill="#000" fill-opacity="0.92"/>
<rect x="698" y="389.9" width="31.6" height="4.6" fill="#000" fill-opacity="0.92"/>
<rect x="698" y="395.4" width="21.2" height="4.6" fill="#000" fill-opacity="0.92"/>
<rect x="698" y="401.0" width="93.4" height="4.6" fill="#000" fill-opacity="0.92"/>
<rect x="698" y="405.1" width="75.7" height="4.6" fill="#000" fill-opacity="0.92"/>
<rect x="698" y="411.1" width="34.5" height="4.6" fill="#000" fill-opacity="0.92"/>
<rect x="698" y="415.3" width="45.9" height="4.6" fill="#000" fill-opacity="0.92"/>
<rect x="698" y="420.9" width="21.2" height="4.6" fill="#000" fill-opacity="0.92"/>
<rect x="698" y="425.1" width="29.0" height="4.6" fill="#000" fill-opacity="0.92"/>
<rect x="698" y="430.8" width="72.8" height="4.6" fill="#000" fill-opacity="0.92"/>
<rect x="698" y="434.9" width="22.7" height="4.6" fill="#000" fill-opacity="0.92"/>
<rect x="698" y="440.5" width="48.1" height="4.6" fill="#000" fill-opacity="0.92"/>
<rect x="698" y="446.3" width="35.2" height="4.6" fill="#000" fill-opacity="0.92"/>
<rect x="698" y="450.1" width="25.9" height="4.6" fill="#000" fill-opacity="0.92"/>
<rect x="698" y="455.8" width="60.0" height="4.6" fill="#000" fill-opacity="0.92"/>
<rect x="698" y="460.2" width="51.9" height="4.6" fill="#000" fill-opacity="0.92"/>
<rect x="698" y="465.9" width="97.8" height="4.6" fill="#000" fill-opacity="0.92"/>
<rect x="698" y="469.7" width="34.0" height="4.6" fill="#000" fill-opacity="0.92"/>
<rect x="698" y="475.3" width="20.0" height="4.6" fill="#000" fill-opacity="0.92"/>
<rect x="698" y="481.1" width="21.5" height="4.6" fill="#000" fill-opacity="0.92"/>
<rect x="698" y="485.5" width="88.3" height="4.6" fill="#000" fill-opacity="0.92"/>
<rect x="698" y="490.8" width="43.0" height="4.6" fill="#000" fill-opacity="0.92"/>
<rect x="698" y="495.1" width="73.1" height="4.6" fill="#000" fill-opacity="0.92"/>
<rect x="698" y="500.7" width="49.3" height="4.6" fill="#000" fill-opacity="0.92"/>
<rect x="698" y="504.7" width="59.1" height="4.6" fill="#000" fill-opacity="0.92"/>
<rect x="698" y="510.3" width="66.8" height="4.6" fill="#000" fill-opacity="0.92"/>
<rect x="698" y="516.2" width="49.3" height="4.6" fill="#000" fill-opacity="0.92"/>
<rect x="698" y="520.5" width="85.3" height="4.6" fill="#000" fill-opacity="0.92"/>
<rect x="698" y="525.7" width="43.0" height="4.6" fill="#000" fill-opacity="0.92"/>
<rect x="698" y="530.2" width="95.0" height="4.6" fill="#000" fill-opacity="0.92"/>
<rect x="698" y="535.6" width="75.7" height="4.6" fill="#000" fill-opacity="0.92"/>
<rect x="698" y="539.8" width="51.3" height="4.6" fill="#000" fill-opacity="0.92"/>
<rect x="698" y="545.1" width="40.0" height="4.6" fill="#000" fill-opacity="0.92"/>
<rect x="698" y="549.7" width="105.5" height="4.6" fill="#000" fill-opacity="0.92"/>
<rect x="698" y="46.0" width="40.9" height="2.4" fill="url(#bg0)"/>
<rect x="698" y="51.7" width="27.0" height="2.4" fill="url(#bg1)"/>
<rect x="698" y="55.8" width="21.8" height="2.4" fill="url(#bg2)"/>
<rect x="698" y="61.4" width="16.4" height="2.4" fill="url(#bg3)"/>
<rect x="698" y="67.2" width="3.9" height="2.4" fill="url(#bg4)"/>
<rect x="698" y="71.6" width="113.6" height="2.4" fill="url(#bg5)"/>
<rect x="698" y="76.9" width="50.4" height="2.4" fill="url(#bg6)"/>
<rect x="698" y="81.3" width="25.4" height="2.4" fill="url(#bg7)"/>
<rect x="698" y="86.7" width="39.7" height="2.4" fill="url(#bg8)"/>
<rect x="698" y="91.2" width="71.3" height="2.4" fill="url(#bg9)"/>
<rect x="698" y="96.8" width="9.9" height="2.4" fill="url(#bg10)"/>
<rect x="698" y="102.0" width="19.4" height="2.4" fill="url(#bg11)"/>
<rect x="698" y="106.4" width="22.4" height="2.4" fill="url(#bg12)"/>
<rect x="698" y="111.7" width="13.5" height="2.4" fill="url(#bg13)"/>
<rect x="698" y="116.3" width="38.5" height="2.4" fill="url(#bg14)"/>
<rect x="698" y="121.6" width="11.7" height="2.4" fill="url(#bg15)"/>
<rect x="698" y="126.2" width="14.0" height="2.4" fill="url(#bg16)"/>
<rect x="698" y="131.5" width="47.4" height="2.4" fill="url(#bg17)"/>
<rect x="698" y="137.1" width="37.9" height="2.4" fill="url(#bg18)"/>
<rect x="698" y="141.5" width="61.0" height="2.4" fill="url(#bg19)"/>
<rect x="698" y="147.1" width="60.0" height="2.4" fill="url(#bg20)"/>
<rect x="698" y="151.4" width="58.0" height="2.4" fill="url(#bg21)"/>
<rect x="698" y="156.4" width="58.0" height="2.4" fill="url(#bg22)"/>
<rect x="698" y="161.2" width="58.0" height="2.4" fill="url(#bg23)"/>
<rect x="698" y="166.6" width="60.0" height="2.4" fill="url(#bg24)"/>
<rect x="698" y="170.8" width="63.0" height="2.4" fill="url(#bg25)"/>
<rect x="698" y="176.1" width="57.0" height="2.4" fill="url(#bg26)"/>
<rect x="698" y="181.8" width="14.0" height="2.4" fill="url(#bg27)"/>
<rect x="698" y="186.0" width="21.0" height="2.4" fill="url(#bg28)"/>
<rect x="698" y="191.8" width="72.0" height="2.4" fill="url(#bg29)"/>
<rect x="698" y="196.0" width="44.0" height="2.4" fill="url(#bg30)"/>
<rect x="698" y="201.8" width="58.0" height="2.4" fill="url(#bg31)"/>
<rect x="698" y="205.9" width="64.7" height="2.4" fill="url(#bg32)"/>
<rect x="698" y="211.5" width="61.0" height="2.4" fill="url(#bg33)"/>
<rect x="698" y="217.0" width="49.8" height="2.4" fill="url(#bg34)"/>
<rect x="698" y="221.4" width="63.0" height="2.4" fill="url(#bg35)"/>
<rect x="698" y="226.5" width="64.7" height="2.4" fill="url(#bg36)"/>
<rect x="698" y="231.3" width="58.0" height="2.4" fill="url(#bg37)"/>
<rect x="698" y="236.9" width="28.4" height="2.4" fill="url(#bg38)"/>
<rect x="698" y="240.7" width="29.5" height="2.4" fill="url(#bg39)"/>
<rect x="698" y="246.7" width="85.6" height="2.4" fill="url(#bg40)"/>
<rect x="698" y="252.0" width="94.5" height="2.4" fill="url(#bg41)"/>
<rect x="698" y="256.8" width="54.0" height="2.4" fill="url(#bg42)"/>
<rect x="698" y="261.6" width="29.5" height="2.4" fill="url(#bg43)"/>
<rect x="698" y="266.3" width="21.6" height="2.4" fill="url(#bg44)"/>
<rect x="698" y="271.7" width="68.3" height="2.4" fill="url(#bg45)"/>
<rect x="698" y="276.1" width="40.3" height="2.4" fill="url(#bg46)"/>
<rect x="698" y="281.6" width="48.6" height="2.4" fill="url(#bg47)"/>
<rect x="698" y="287.2" width="71.3" height="2.4" fill="url(#bg48)"/>
<rect x="698" y="291.6" width="21.6" height="2.4" fill="url(#bg49)"/>
<rect x="698" y="297.3" width="18.5" height="2.4" fill="url(#bg50)"/>
<rect x="698" y="301.5" width="54.0" height="2.4" fill="url(#bg51)"/>
<rect x="698" y="306.9" width="33.0" height="2.4" fill="url(#bg52)"/>
<rect x="698" y="311.0" width="88.5" height="2.4" fill="url(#bg53)"/>
<rect x="698" y="317.0" width="22.4" height="2.4" fill="url(#bg54)"/>
<rect x="698" y="320.8" width="25.4" height="2.4" fill="url(#bg55)"/>
<rect x="698" y="326.5" width="71.3" height="2.4" fill="url(#bg56)"/>
<rect x="698" y="331.9" width="76.6" height="2.4" fill="url(#bg57)"/>
<rect x="698" y="335.7" width="16.4" height="2.4" fill="url(#bg58)"/>
<rect x="698" y="341.7" width="38.5" height="2.4" fill="url(#bg59)"/>
<rect x="698" y="346.1" width="40.3" height="2.4" fill="url(#bg60)"/>
<rect x="698" y="351.8" width="41.8" height="2.4" fill="url(#bg61)"/>
<rect x="698" y="355.8" width="25.4" height="2.4" fill="url(#bg62)"/>
<rect x="698" y="361.7" width="27.5" height="2.4" fill="url(#bg63)"/>
<rect x="698" y="367.3" width="90.7" height="2.4" fill="url(#bg64)"/>
<rect x="698" y="371.5" width="46.2" height="2.4" fill="url(#bg65)"/>
<rect x="698" y="376.6" width="86.8" height="2.4" fill="url(#bg66)"/>
<rect x="698" y="381.0" width="27.2" height="2.4" fill="url(#bg67)"/>
<rect x="698" y="386.6" width="35.5" height="2.4" fill="url(#bg68)"/>
<rect x="698" y="390.8" width="30.1" height="2.4" fill="url(#bg69)"/>
<rect x="698" y="396.3" width="19.7" height="2.4" fill="url(#bg70)"/>
<rect x="698" y="401.9" width="91.9" height="2.4" fill="url(#bg71)"/>
<rect x="698" y="406.0" width="74.2" height="2.4" fill="url(#bg72)"/>
<rect x="698" y="412.0" width="33.0" height="2.4" fill="url(#bg73)"/>
<rect x="698" y="416.2" width="44.4" height="2.4" fill="url(#bg74)"/>
<rect x="698" y="421.8" width="19.7" height="2.4" fill="url(#bg75)"/>
<rect x="698" y="426.0" width="27.5" height="2.4" fill="url(#bg76)"/>
<rect x="698" y="431.7" width="71.3" height="2.4" fill="url(#bg77)"/>
<rect x="698" y="435.8" width="21.2" height="2.4" fill="url(#bg78)"/>
<rect x="698" y="441.4" width="46.6" height="2.4" fill="url(#bg79)"/>
<rect x="698" y="447.2" width="33.7" height="2.4" fill="url(#bg80)"/>
<rect x="698" y="451.0" width="24.4" height="2.4" fill="url(#bg81)"/>
<rect x="698" y="456.7" width="58.5" height="2.4" fill="url(#bg82)"/>
<rect x="698" y="461.1" width="50.4" height="2.4" fill="url(#bg83)"/>
<rect x="698" y="466.8" width="96.3" height="2.4" fill="url(#bg84)"/>
<rect x="698" y="470.6" width="32.5" height="2.4" fill="url(#bg85)"/>
<rect x="698" y="476.2" width="18.5" height="2.4" fill="url(#bg86)"/>
<rect x="698" y="482.0" width="20.0" height="2.4" fill="url(#bg87)"/>
<rect x="698" y="486.4" width="86.8" height="2.4" fill="url(#bg88)"/>
<rect x="698" y="491.7" width="41.5" height="2.4" fill="url(#bg89)"/>
<rect x="698" y="496.0" width="71.6" height="2.4" fill="url(#bg90)"/>
<rect x="698" y="501.6" width="47.8" height="2.4" fill="url(#bg91)"/>
<rect x="698" y="505.6" width="57.6" height="2.4" fill="url(#bg92)"/>
<rect x="698" y="511.2" width="65.3" height="2.4" fill="url(#bg93)"/>
<rect x="698" y="517.1" width="47.8" height="2.4" fill="url(#bg94)"/>
<rect x="698" y="521.4" width="83.8" height="2.4" fill="url(#bg95)"/>
<rect x="698" y="526.6" width="41.5" height="2.4" fill="url(#bg96)"/>
<rect x="698" y="531.1" width="93.5" height="2.4" fill="url(#bg97)"/>
<rect x="698" y="536.5" width="74.2" height="2.4" fill="url(#bg98)"/>
<rect x="698" y="540.7" width="49.8" height="2.4" fill="url(#bg99)"/>
<rect x="698" y="546.0" width="38.5" height="2.4" fill="url(#bg100)"/>
<rect x="698" y="550.6" width="104.0" height="2.4" fill="url(#bg101)"/>
<rect x="697" y="45.5" width="408" height="509.5" fill="none" stroke="#9a9a9a" stroke-width="1.6"/>
<rect x="696.1" y="555" width="1.6" height="6.5" fill="#d0d0d0"/>
<rect x="749.2" y="555" width="1.6" height="6.5" fill="#d0d0d0"/>
<rect x="803.7" y="555" width="1.6" height="6.5" fill="#d0d0d0"/>
<rect x="858.3" y="555" width="1.6" height="6.5" fill="#d0d0d0"/>
<rect x="912.8" y="555" width="1.6" height="6.5" fill="#d0d0d0"/>
<rect x="967.3" y="555" width="1.6" height="6.5" fill="#d0d0d0"/>
<rect x="1021.8" y="555" width="1.6" height="6.5" fill="#d0d0d0"/>
<rect x="1076.3" y="555" width="1.6" height="6.5" fill="#d0d0d0"/>
</svg>
<div class="t c" style="left:676.6px;width:40px;top:563.3px;font-size:16.3px;color:#d8d8d8">0</div>
<div class="t c" style="left:731.0px;width:40px;top:563.3px;font-size:16.3px;color:#d8d8d8">2</div>
<div class="t c" style="left:785.5px;width:40px;top:563.3px;font-size:16.3px;color:#d8d8d8">4</div>
<div class="t c" style="left:840.1px;width:40px;top:563.3px;font-size:16.3px;color:#d8d8d8">6</div>
<div class="t c" style="left:894.6px;width:40px;top:563.3px;font-size:16.3px;color:#d8d8d8">8</div>
<div class="t c" style="left:949.1px;width:40px;top:563.3px;font-size:16.3px;color:#d8d8d8">10</div>
<div class="t c" style="left:1003.6px;width:40px;top:563.3px;font-size:16.3px;color:#d8d8d8">12</div>
<div class="t c" style="left:1058.1px;width:40px;top:563.3px;font-size:16.3px;color:#d8d8d8">14</div>
<div class="abs" style="left:1136px;top:20px;width:782px;height:569px;background:#1f1f1f"></div>
<div class="abs" style="left:1144px;top:28px;width:767px;height:553px;background:#333333"></div>
<div class="abs" style="left:1188px;top:52px;width:719px;height:499px;background:#232323"></div>
<div id="gamfb" class="abs" style="left:1188px;top:52px;width:719px;height:499px"><div class="abs" style="left:0;top:0;width:719px;height:499px;clip-path:polygon(269.4px 581.8px,268.9px 582.1px,268.0px 582.4px,266.5px 582.4px,263.4px 581.5px,255.5px 575.8px,240.5px 563.4px,216.2px 543.6px,179.2px 511.6px,122.2px 448.0px,42.2px 328.7px,-29.1px 188.5px,-61.4px 87.5px,-59.8px 37.0px,-35.7px 17.3px,-0.5px 14.2px,37.6px 15.3px,81.3px 18.9px,134.0px 24.3px,198.6px 31.5px,276.7px 40.4px,367.0px 50.7px,460.9px 61.4px,546.7px 71.1px,613.4px 78.8px,660.7px 84.1px,699.4px 87.5px,748.1px 94.1px);background:radial-gradient(circle at 193px 132px,#fff 0,rgba(255,255,255,.8) 20px,rgba(255,255,255,0) 90px),conic-gradient(from 0deg at 193px 132px,#ff0 5deg,#f00 81deg,#f0f 134deg,#00f 186deg,#0ff 261deg,#0f0 314deg,#ff0 365deg)"></div><svg class="abs" style="left:0;top:0" width="719" height="499"><path d="M269.4,581.8 L268.9,582.1 L268.0,582.4 L266.5,582.4 L263.4,581.5 L255.5,575.8 L240.5,563.4 L216.2,543.6 L179.2,511.6 L122.2,448.0 L42.2,328.7 L-29.1,188.5 L-61.4,87.5 L-59.8,37.0 L-35.7,17.3 L-0.5,14.2 L37.6,15.3 L81.3,18.9 L134.0,24.3 L198.6,31.5 L276.7,40.4 L367.0,50.7 L460.9,61.4 L546.7,71.1 L613.4,78.8 L660.7,84.1 L699.4,87.5 L748.1,94.1 Z M522.6,77.8 L97.3,38.3 L163.2,441.1 Z" fill="#000" fill-opacity="0.4" fill-rule="evenodd"/></svg></div>
<canvas id="gam" class="abs" style="left:1188px;top:52px" width="719" height="499"></canvas>
<svg class="abs" style="left:0;top:0" width="1920" height="839">
<rect x="1180" y="550.0" width="6.5" height="1.5" fill="#c8c8c8"/>
<rect x="1180" y="500.2" width="6.5" height="1.5" fill="#c8c8c8"/>
<rect x="1180" y="450.4" width="6.5" height="1.5" fill="#c8c8c8"/>
<rect x="1180" y="400.7" width="6.5" height="1.5" fill="#c8c8c8"/>
<rect x="1180" y="350.9" width="6.5" height="1.5" fill="#c8c8c8"/>
<rect x="1180" y="301.1" width="6.5" height="1.5" fill="#c8c8c8"/>
<rect x="1180" y="251.3" width="6.5" height="1.5" fill="#c8c8c8"/>
<rect x="1180" y="201.6" width="6.5" height="1.5" fill="#c8c8c8"/>
<rect x="1180" y="151.8" width="6.5" height="1.5" fill="#c8c8c8"/>
<rect x="1180" y="102.0" width="6.5" height="1.5" fill="#c8c8c8"/>
<rect x="1180" y="52.2" width="6.5" height="1.5" fill="#c8c8c8"/>
<rect x="1186.7" y="552" width="1.5" height="6" fill="#c8c8c8"/>
<rect x="1251.9" y="552" width="1.5" height="6" fill="#c8c8c8"/>
<rect x="1317.2" y="552" width="1.5" height="6" fill="#c8c8c8"/>
<rect x="1382.5" y="552" width="1.5" height="6" fill="#c8c8c8"/>
<rect x="1447.8" y="552" width="1.5" height="6" fill="#c8c8c8"/>
<rect x="1513.1" y="552" width="1.5" height="6" fill="#c8c8c8"/>
<rect x="1578.4" y="552" width="1.5" height="6" fill="#c8c8c8"/>
<rect x="1643.6" y="552" width="1.5" height="6" fill="#c8c8c8"/>
<rect x="1708.9" y="552" width="1.5" height="6" fill="#c8c8c8"/>
<rect x="1774.2" y="552" width="1.5" height="6" fill="#c8c8c8"/>
<rect x="1839.5" y="552" width="1.5" height="6" fill="#c8c8c8"/>
<rect x="1187.5" y="51.8" width="720" height="499.5" fill="none" stroke="#a0a0a0" stroke-width="1.5"/>
</svg>
<div class="t r" style="left:1099.5px;width:80px;top:543.6px;font-size:16.5px;color:#d8d8d8">0,1</div>
<div class="t r" style="left:1099.5px;width:80px;top:491.4px;font-size:16.5px;color:#d8d8d8">0,15</div>
<div class="t r" style="left:1099.5px;width:80px;top:441.7px;font-size:16.5px;color:#d8d8d8">0,2</div>
<div class="t r" style="left:1099.5px;width:80px;top:391.9px;font-size:16.5px;color:#d8d8d8">0,25</div>
<div class="t r" style="left:1099.5px;width:80px;top:342.1px;font-size:16.5px;color:#d8d8d8">0,3</div>
<div class="t r" style="left:1099.5px;width:80px;top:292.3px;font-size:16.5px;color:#d8d8d8">0,35</div>
<div class="t r" style="left:1099.5px;width:80px;top:242.6px;font-size:16.5px;color:#d8d8d8">0,4</div>
<div class="t r" style="left:1099.5px;width:80px;top:192.8px;font-size:16.5px;color:#d8d8d8">0,45</div>
<div class="t r" style="left:1099.5px;width:80px;top:143.0px;font-size:16.5px;color:#d8d8d8">0,5</div>
<div class="t r" style="left:1099.5px;width:80px;top:93.2px;font-size:16.5px;color:#d8d8d8">0,55</div>
<div class="t r" style="left:1099.5px;width:80px;top:43.5px;font-size:16.5px;color:#d8d8d8">0,6</div>
<div class="t c" style="left:1146.9px;width:80px;top:558.6px;font-size:16.8px;color:#d8d8d8">0,05</div>
<div class="t c" style="left:1212.2px;width:80px;top:558.6px;font-size:16.8px;color:#d8d8d8">0,1</div>
<div class="t c" style="left:1277.5px;width:80px;top:558.6px;font-size:16.8px;color:#d8d8d8">0,15</div>
<div class="t c" style="left:1342.8px;width:80px;top:558.6px;font-size:16.8px;color:#d8d8d8">0,2</div>
<div class="t c" style="left:1408.0px;width:80px;top:558.6px;font-size:16.8px;color:#d8d8d8">0,25</div>
<div class="t c" style="left:1473.3px;width:80px;top:558.6px;font-size:16.8px;color:#d8d8d8">0,3</div>
<div class="t c" style="left:1538.6px;width:80px;top:558.6px;font-size:16.8px;color:#d8d8d8">0,35</div>
<div class="t c" style="left:1603.9px;width:80px;top:558.6px;font-size:16.8px;color:#d8d8d8">0,4</div>
<div class="t c" style="left:1669.2px;width:80px;top:558.6px;font-size:16.8px;color:#d8d8d8">0,45</div>
<div class="t c" style="left:1734.5px;width:80px;top:558.6px;font-size:16.8px;color:#d8d8d8">0,5</div>
<div class="t c" style="left:1799.8px;width:80px;top:558.6px;font-size:16.8px;color:#d8d8d8">0,55</div>
<svg class="abs" style="left:0;top:0" width="1920" height="839">
<rect x="1277.1" y="80.4" width="15" height="15" fill="none" stroke="#ffffff" stroke-opacity="0.92" stroke-width="2"/>
<rect x="1296.1" y="86.8" width="15" height="15" fill="none" stroke="#ffffff" stroke-opacity="0.92" stroke-width="2"/>
<rect x="1299.7" y="91.1" width="15" height="15" fill="none" stroke="#ffffff" stroke-opacity="0.92" stroke-width="2"/>
<rect x="1304.7" y="94.7" width="15" height="15" fill="none" stroke="#ffffff" stroke-opacity="0.92" stroke-width="2"/>
<rect x="1344.1" y="101.1" width="15" height="15" fill="none" stroke="#ffffff" stroke-opacity="0.92" stroke-width="2"/>
<rect x="1358.4" y="101.8" width="15" height="15" fill="none" stroke="#ffffff" stroke-opacity="0.92" stroke-width="2"/>
<rect x="1364.1" y="88.3" width="15" height="15" fill="none" stroke="#ffffff" stroke-opacity="0.92" stroke-width="2"/>
<rect x="1378.4" y="89.7" width="15" height="15" fill="none" stroke="#ffffff" stroke-opacity="0.92" stroke-width="2"/>
<rect x="1389.8" y="92.5" width="15" height="15" fill="none" stroke="#ffffff" stroke-opacity="0.92" stroke-width="2"/>
<rect x="1401.3" y="91.8" width="15" height="15" fill="none" stroke="#ffffff" stroke-opacity="0.92" stroke-width="2"/>
<rect x="1428.5" y="96.8" width="15" height="15" fill="none" stroke="#ffffff" stroke-opacity="0.92" stroke-width="2"/>
<rect x="1444.2" y="96.1" width="15" height="15" fill="none" stroke="#ffffff" stroke-opacity="0.92" stroke-width="2"/>
<rect x="1283.3" y="120.5" width="15" height="15" fill="none" stroke="#ffffff" stroke-opacity="0.92" stroke-width="2"/>
<rect x="1314.0" y="118.3" width="15" height="15" fill="none" stroke="#ffffff" stroke-opacity="0.92" stroke-width="2"/>
<rect x="1299.7" y="134.7" width="15" height="15" fill="none" stroke="#ffffff" stroke-opacity="0.92" stroke-width="2"/>
<rect x="1315.5" y="134.0" width="15" height="15" fill="none" stroke="#ffffff" stroke-opacity="0.92" stroke-width="2"/>
<rect x="1321.2" y="148.3" width="15" height="15" fill="none" stroke="#ffffff" stroke-opacity="0.92" stroke-width="2"/>
<rect x="1383.4" y="124.7" width="15" height="15" fill="none" stroke="#ffffff" stroke-opacity="0.92" stroke-width="2"/>
<rect x="1402.0" y="134.7" width="15" height="15" fill="none" stroke="#ffffff" stroke-opacity="0.92" stroke-width="2"/>
<rect x="1362.7" y="144.0" width="15" height="15" fill="none" stroke="#ffffff" stroke-opacity="0.92" stroke-width="2"/>
<rect x="1354.8" y="152.6" width="15" height="15" fill="none" stroke="#ffffff" stroke-opacity="0.92" stroke-width="2"/>
<rect x="1356.9" y="162.6" width="15" height="15" fill="none" stroke="#ffffff" stroke-opacity="0.92" stroke-width="2"/>
<rect x="1394.1" y="162.6" width="15" height="15" fill="none" stroke="#ffffff" stroke-opacity="0.92" stroke-width="2"/>
<rect x="1415.6" y="155.5" width="15" height="15" fill="none" stroke="#ffffff" stroke-opacity="0.92" stroke-width="2"/>
<rect x="1289.0" y="159.8" width="15" height="15" fill="none" stroke="#ffffff" stroke-opacity="0.92" stroke-width="2"/>
<rect x="1291.1" y="168.4" width="15" height="15" fill="none" stroke="#ffffff" stroke-opacity="0.92" stroke-width="2"/>
<rect x="1477.8" y="100.0" width="15" height="15" fill="none" stroke="#ffffff" stroke-opacity="0.92" stroke-width="2"/>
<rect x="1507.5" y="112.5" width="15" height="15" fill="none" stroke="#ffffff" stroke-opacity="0.92" stroke-width="2"/>
<rect x="1498.9" y="120.3" width="15" height="15" fill="none" stroke="#ffffff" stroke-opacity="0.92" stroke-width="2"/>
<rect x="1538.0" y="106.3" width="15" height="15" fill="none" stroke="#ffffff" stroke-opacity="0.92" stroke-width="2"/>
<rect x="1579.1" y="108.6" width="15" height="15" fill="none" stroke="#ffffff" stroke-opacity="0.92" stroke-width="2"/>
<rect x="1650.9" y="124.2" width="15" height="15" fill="none" stroke="#ffffff" stroke-opacity="0.92" stroke-width="2"/>
<rect x="1704.1" y="120.3" width="15" height="15" fill="none" stroke="#ffffff" stroke-opacity="0.92" stroke-width="2"/>
<rect x="1698.1" y="126.5" width="15" height="15" fill="none" stroke="#ffffff" stroke-opacity="0.92" stroke-width="2"/>
<rect x="1695.0" y="130.5" width="15" height="15" fill="none" stroke="#ffffff" stroke-opacity="0.92" stroke-width="2"/>
<rect x="1688.8" y="135.2" width="15" height="15" fill="none" stroke="#ffffff" stroke-opacity="0.92" stroke-width="2"/>
<rect x="1501.3" y="143.8" width="15" height="15" fill="none" stroke="#ffffff" stroke-opacity="0.92" stroke-width="2"/>
<rect x="1487.2" y="158.6" width="15" height="15" fill="none" stroke="#ffffff" stroke-opacity="0.92" stroke-width="2"/>
<rect x="1588.8" y="143.8" width="15" height="15" fill="none" stroke="#ffffff" stroke-opacity="0.92" stroke-width="2"/>
<rect x="1570.8" y="161.7" width="15" height="15" fill="none" stroke="#ffffff" stroke-opacity="0.92" stroke-width="2"/>
<rect x="1631.7" y="162.5" width="15" height="15" fill="none" stroke="#ffffff" stroke-opacity="0.92" stroke-width="2"/>
<rect x="1440.3" y="96.1" width="15" height="15" fill="none" stroke="#ffffff" stroke-opacity="0.92" stroke-width="2"/>
<rect x="1419.5" y="138.1" width="15" height="15" fill="none" stroke="#ffffff" stroke-opacity="0.92" stroke-width="2"/>
<rect x="1418.8" y="152.1" width="15" height="15" fill="none" stroke="#ffffff" stroke-opacity="0.92" stroke-width="2"/>
<rect x="1442.5" y="126.9" width="15" height="15" fill="none" stroke="#ffffff" stroke-opacity="0.92" stroke-width="2"/>
<rect x="1445.5" y="132.1" width="15" height="15" fill="none" stroke="#ffffff" stroke-opacity="0.92" stroke-width="2"/>
<rect x="1442.9" y="140.4" width="15" height="15" fill="none" stroke="#ffffff" stroke-opacity="0.92" stroke-width="2"/>
<rect x="1471.5" y="127.5" width="15" height="15" fill="none" stroke="#ffffff" stroke-opacity="0.92" stroke-width="2"/>
<rect x="1472.5" y="134.2" width="15" height="15" fill="none" stroke="#ffffff" stroke-opacity="0.92" stroke-width="2"/>
<rect x="1477.5" y="124.5" width="15" height="15" fill="none" stroke="#ffffff" stroke-opacity="0.92" stroke-width="2"/>
<rect x="1468.5" y="130.5" width="15" height="15" fill="none" stroke="#ffffff" stroke-opacity="0.92" stroke-width="2"/>
<rect x="1513.5" y="121.3" width="15" height="15" fill="none" stroke="#ffffff" stroke-opacity="0.92" stroke-width="2"/>
<rect x="1294.2" y="188.3" width="15" height="15" fill="none" stroke="#ffffff" stroke-opacity="0.92" stroke-width="2"/>
<rect x="1305.0" y="190.0" width="15" height="15" fill="none" stroke="#ffffff" stroke-opacity="0.92" stroke-width="2"/>
<rect x="1296.7" y="204.2" width="15" height="15" fill="none" stroke="#ffffff" stroke-opacity="0.92" stroke-width="2"/>
<rect x="1299.2" y="213.4" width="15" height="15" fill="none" stroke="#ffffff" stroke-opacity="0.92" stroke-width="2"/>
<rect x="1320.9" y="205.0" width="15" height="15" fill="none" stroke="#ffffff" stroke-opacity="0.92" stroke-width="2"/>
<rect x="1345.9" y="201.7" width="15" height="15" fill="none" stroke="#ffffff" stroke-opacity="0.92" stroke-width="2"/>
<rect x="1345.9" y="211.7" width="15" height="15" fill="none" stroke="#ffffff" stroke-opacity="0.92" stroke-width="2"/>
<rect x="1380.1" y="206.7" width="15" height="15" fill="none" stroke="#ffffff" stroke-opacity="0.92" stroke-width="2"/>
<rect x="1431.8" y="190.8" width="15" height="15" fill="none" stroke="#ffffff" stroke-opacity="0.92" stroke-width="2"/>
<rect x="1426.8" y="220.0" width="15" height="15" fill="none" stroke="#ffffff" stroke-opacity="0.92" stroke-width="2"/>
<rect x="1389.3" y="240.9" width="15" height="15" fill="none" stroke="#ffffff" stroke-opacity="0.92" stroke-width="2"/>
<rect x="1453.5" y="254.2" width="15" height="15" fill="none" stroke="#ffffff" stroke-opacity="0.92" stroke-width="2"/>
<rect x="1305.0" y="250.9" width="15" height="15" fill="none" stroke="#ffffff" stroke-opacity="0.92" stroke-width="2"/>
<rect x="1310.0" y="280.9" width="15" height="15" fill="none" stroke="#ffffff" stroke-opacity="0.92" stroke-width="2"/>
<rect x="1343.9" y="291.8" width="15" height="15" fill="none" stroke="#ffffff" stroke-opacity="0.92" stroke-width="2"/>
<rect x="1511.6" y="192.5" width="15" height="15" fill="none" stroke="#ffffff" stroke-opacity="0.92" stroke-width="2"/>
<rect x="1539.8" y="199.2" width="15" height="15" fill="none" stroke="#ffffff" stroke-opacity="0.92" stroke-width="2"/>
<rect x="1580.2" y="204.0" width="15" height="15" fill="none" stroke="#ffffff" stroke-opacity="0.92" stroke-width="2"/>
<rect x="1494.4" y="280.8" width="15" height="15" fill="none" stroke="#ffffff" stroke-opacity="0.92" stroke-width="2"/>
<rect x="1513.1" y="312.6" width="15" height="15" fill="none" stroke="#ffffff" stroke-opacity="0.92" stroke-width="2"/>
<rect x="1330.0" y="370.1" width="15" height="15" fill="none" stroke="#ffffff" stroke-opacity="0.92" stroke-width="2"/>
<rect x="1342.9" y="485.2" width="15" height="15" fill="none" stroke="#ffffff" stroke-opacity="0.92" stroke-width="2"/>
<rect x="1372.3" y="176.3" width="14" height="14" fill="#fff" stroke="#000" stroke-width="2.5"/>
<ellipse cx="1285.5" cy="87.9" rx="5.1" ry="4.7" fill="#00ff20" stroke="#111" stroke-width="1.1"/>
<ellipse cx="1300.0" cy="93.6" rx="5.1" ry="4.7" fill="#507a30" stroke="#111" stroke-width="1.1"/>
<ellipse cx="1306.5" cy="96.5" rx="5.1" ry="4.7" fill="#70a040" stroke="#111" stroke-width="1.1"/>
<ellipse cx="1309.4" cy="101.2" rx="5.1" ry="4.7" fill="#5a8a30" stroke="#111" stroke-width="1.1"/>
<ellipse cx="1348.4" cy="107.9" rx="5.1" ry="4.7" fill="#7a8a40" stroke="#111" stroke-width="1.1"/>
<ellipse cx="1361.6" cy="105.0" rx="5.1" ry="4.7" fill="#50602a" stroke="#111" stroke-width="1.1"/>
<ellipse cx="1365.4" cy="95.0" rx="5.1" ry="4.7" fill="#a0a020" stroke="#111" stroke-width="1.1"/>
<ellipse cx="1370.9" cy="95.0" rx="5.1" ry="4.7" fill="#909020" stroke="#111" stroke-width="1.1"/>
<ellipse cx="1383.0" cy="97.9" rx="5.1" ry="4.7" fill="#f0e000" stroke="#111" stroke-width="1.1"/>
<ellipse cx="1390.5" cy="99.3" rx="5.1" ry="4.7" fill="#a09030" stroke="#111" stroke-width="1.1"/>
<ellipse cx="1403.8" cy="97.9" rx="5.1" ry="4.7" fill="#b0a020" stroke="#111" stroke-width="1.1"/>
<ellipse cx="1429.5" cy="101.5" rx="5.1" ry="4.7" fill="#b09a30" stroke="#111" stroke-width="1.1"/>
<ellipse cx="1437.4" cy="100.8" rx="5.1" ry="4.7" fill="#f0b020" stroke="#111" stroke-width="1.1"/>
<ellipse cx="1289.3" cy="128.7" rx="5.1" ry="4.7" fill="#208060" stroke="#111" stroke-width="1.1"/>
<ellipse cx="1320.4" cy="125.8" rx="5.1" ry="4.7" fill="#609060" stroke="#111" stroke-width="1.1"/>
<ellipse cx="1314.4" cy="136.8" rx="5.1" ry="4.7" fill="#304030" stroke="#111" stroke-width="1.1"/>
<ellipse cx="1306.5" cy="143.7" rx="5.1" ry="4.7" fill="#40a080" stroke="#111" stroke-width="1.1"/>
<ellipse cx="1326.1" cy="159.4" rx="5.1" ry="4.7" fill="#80a890" stroke="#111" stroke-width="1.1"/>
<ellipse cx="1384.5" cy="133.7" rx="5.1" ry="4.7" fill="#d0c898" stroke="#111" stroke-width="1.1"/>
<ellipse cx="1406.2" cy="136.8" rx="5.1" ry="4.7" fill="#403828" stroke="#111" stroke-width="1.1"/>
<ellipse cx="1367.6" cy="153.7" rx="5.1" ry="4.7" fill="#d0d8b0" stroke="#111" stroke-width="1.1"/>
<ellipse cx="1357.3" cy="163.7" rx="5.1" ry="4.7" fill="#c0d0c0" stroke="#111" stroke-width="1.1"/>
<ellipse cx="1362.3" cy="171.9" rx="5.1" ry="4.7" fill="#c0ccc0" stroke="#111" stroke-width="1.1"/>
<ellipse cx="1381.6" cy="171.9" rx="5.1" ry="4.7" fill="#d8d0c0" stroke="#111" stroke-width="1.1"/>
<ellipse cx="1393.3" cy="171.9" rx="5.1" ry="4.7" fill="#e0d0c0" stroke="#111" stroke-width="1.1"/>
<ellipse cx="1375.2" cy="184.5" rx="5.1" ry="4.7" fill="#b8b8b8" stroke="#111" stroke-width="1.1"/>
<ellipse cx="1296.5" cy="168.7" rx="5.1" ry="4.7" fill="#208888" stroke="#111" stroke-width="1.1"/>
<ellipse cx="1290.0" cy="175.1" rx="5.1" ry="4.7" fill="#104848" stroke="#111" stroke-width="1.1"/>
<ellipse cx="1298.6" cy="178.0" rx="5.1" ry="4.7" fill="#209898" stroke="#111" stroke-width="1.1"/>
<ellipse cx="1418.8" cy="148.0" rx="5.1" ry="4.7" fill="#f0b090" stroke="#111" stroke-width="1.1"/>
<ellipse cx="1417.4" cy="157.6" rx="5.1" ry="4.7" fill="#f0b898" stroke="#111" stroke-width="1.1"/>
<ellipse cx="1412.4" cy="165.1" rx="5.1" ry="4.7" fill="#f0c0a8" stroke="#111" stroke-width="1.1"/>
<ellipse cx="1442.4" cy="133.7" rx="5.1" ry="4.7" fill="#c08060" stroke="#111" stroke-width="1.1"/>
<ellipse cx="1433.1" cy="147.3" rx="5.1" ry="4.7" fill="#c08870" stroke="#111" stroke-width="1.1"/>
<ellipse cx="1440.3" cy="143.0" rx="5.1" ry="4.7" fill="#c08870" stroke="#111" stroke-width="1.1"/>
<ellipse cx="1453.1" cy="143.7" rx="5.1" ry="4.7" fill="#d08870" stroke="#111" stroke-width="1.1"/>
<ellipse cx="1432.5" cy="146.7" rx="5.1" ry="4.7" fill="#c08870" stroke="#111" stroke-width="1.1"/>
<ellipse cx="1434.0" cy="143.0" rx="5.1" ry="4.7" fill="#c89078" stroke="#111" stroke-width="1.1"/>
<ellipse cx="1461.2" cy="135.8" rx="5.1" ry="4.7" fill="#d09070" stroke="#111" stroke-width="1.1"/>
<ellipse cx="1406.2" cy="136.7" rx="5.1" ry="4.7" fill="#403828" stroke="#111" stroke-width="1.1"/>
<ellipse cx="1462.7" cy="110.3" rx="5.1" ry="4.7" fill="#b08040" stroke="#111" stroke-width="1.1"/>
<ellipse cx="1471.3" cy="102.8" rx="5.1" ry="4.7" fill="#e0a020" stroke="#111" stroke-width="1.1"/>
<ellipse cx="1475.2" cy="105.2" rx="5.1" ry="4.7" fill="#f0a000" stroke="#111" stroke-width="1.1"/>
<ellipse cx="1506.4" cy="115.6" rx="5.1" ry="4.7" fill="#a06030" stroke="#111" stroke-width="1.1"/>
<ellipse cx="1536.0" cy="108.8" rx="5.1" ry="4.7" fill="#e08820" stroke="#111" stroke-width="1.1"/>
<ellipse cx="1573.6" cy="111.9" rx="5.1" ry="4.7" fill="#f08010" stroke="#111" stroke-width="1.1"/>
<ellipse cx="1475.2" cy="121.6" rx="5.1" ry="4.7" fill="#8a5a38" stroke="#111" stroke-width="1.1"/>
<ellipse cx="1464.2" cy="125.5" rx="5.1" ry="4.7" fill="#906040" stroke="#111" stroke-width="1.1"/>
<ellipse cx="1489.2" cy="128.1" rx="5.1" ry="4.7" fill="#503020" stroke="#111" stroke-width="1.1"/>
<ellipse cx="1495.5" cy="126.6" rx="5.1" ry="4.7" fill="#c08060" stroke="#111" stroke-width="1.1"/>
<ellipse cx="1443.1" cy="133.3" rx="5.1" ry="4.7" fill="#c08870" stroke="#111" stroke-width="1.1"/>
<ellipse cx="1461.1" cy="135.6" rx="5.1" ry="4.7" fill="#d09070" stroke="#111" stroke-width="1.1"/>
<ellipse cx="1468.9" cy="141.1" rx="5.1" ry="4.7" fill="#f0a080" stroke="#111" stroke-width="1.1"/>
<ellipse cx="1453.3" cy="143.4" rx="5.1" ry="4.7" fill="#d08060" stroke="#111" stroke-width="1.1"/>
<ellipse cx="1497.5" cy="149.7" rx="5.1" ry="4.7" fill="#d08070" stroke="#111" stroke-width="1.1"/>
<ellipse cx="1483.0" cy="166.6" rx="5.1" ry="4.7" fill="#c08080" stroke="#111" stroke-width="1.1"/>
<ellipse cx="1586.6" cy="147.8" rx="5.1" ry="4.7" fill="#c05060" stroke="#111" stroke-width="1.1"/>
<ellipse cx="1594.4" cy="166.6" rx="5.1" ry="4.7" fill="#602030" stroke="#111" stroke-width="1.1"/>
<ellipse cx="1649.4" cy="127.0" rx="5.1" ry="4.7" fill="#e04030" stroke="#111" stroke-width="1.1"/>
<ellipse cx="1633.4" cy="168.8" rx="5.1" ry="4.7" fill="#c03050" stroke="#111" stroke-width="1.1"/>
<ellipse cx="1703.3" cy="122.3" rx="5.1" ry="4.7" fill="#ff1010" stroke="#111" stroke-width="1.1"/>
<ellipse cx="1704.8" cy="131.7" rx="5.1" ry="4.7" fill="#c01030" stroke="#111" stroke-width="1.1"/>
<ellipse cx="1696.3" cy="138.4" rx="5.1" ry="4.7" fill="#c01030" stroke="#111" stroke-width="1.1"/>
<ellipse cx="1303.4" cy="196.7" rx="5.1" ry="4.7" fill="#00f0f0" stroke="#111" stroke-width="1.1"/>
<ellipse cx="1310.0" cy="201.4" rx="5.1" ry="4.7" fill="#40a0a0" stroke="#111" stroke-width="1.1"/>
<ellipse cx="1303.4" cy="213.4" rx="5.1" ry="4.7" fill="#208890" stroke="#111" stroke-width="1.1"/>
<ellipse cx="1326.4" cy="213.4" rx="5.1" ry="4.7" fill="#5898a0" stroke="#111" stroke-width="1.1"/>
<ellipse cx="1350.4" cy="213.4" rx="5.1" ry="4.7" fill="#707880" stroke="#111" stroke-width="1.1"/>
<ellipse cx="1350.4" cy="218.0" rx="5.1" ry="4.7" fill="#8098b0" stroke="#111" stroke-width="1.1"/>
<ellipse cx="1382.6" cy="216.7" rx="5.1" ry="4.7" fill="#807888" stroke="#111" stroke-width="1.1"/>
<ellipse cx="1431.0" cy="199.7" rx="5.1" ry="4.7" fill="#c08090" stroke="#111" stroke-width="1.1"/>
<ellipse cx="1301.4" cy="228.0" rx="5.1" ry="4.7" fill="#104850" stroke="#111" stroke-width="1.1"/>
<ellipse cx="1362.6" cy="234.7" rx="5.1" ry="4.7" fill="#000000" stroke="#111" stroke-width="1.1"/>
<ellipse cx="1433.5" cy="236.4" rx="5.1" ry="4.7" fill="#503040" stroke="#111" stroke-width="1.1"/>
<ellipse cx="1392.6" cy="253.1" rx="5.1" ry="4.7" fill="#706080" stroke="#111" stroke-width="1.1"/>
<ellipse cx="1459.3" cy="274.2" rx="5.1" ry="4.7" fill="#503050" stroke="#111" stroke-width="1.1"/>
<ellipse cx="1310.9" cy="262.6" rx="5.1" ry="4.7" fill="#2080a0" stroke="#111" stroke-width="1.1"/>
<ellipse cx="1314.2" cy="300.9" rx="5.1" ry="4.7" fill="#104858" stroke="#111" stroke-width="1.1"/>
<ellipse cx="1348.4" cy="304.3" rx="5.1" ry="4.7" fill="#506090" stroke="#111" stroke-width="1.1"/>
<ellipse cx="1528.3" cy="203.8" rx="5.1" ry="4.7" fill="#502838" stroke="#111" stroke-width="1.1"/>
<ellipse cx="1536.6" cy="208.2" rx="5.1" ry="4.7" fill="#c06080" stroke="#111" stroke-width="1.1"/>
<ellipse cx="1586.2" cy="213.9" rx="5.1" ry="4.7" fill="#803060" stroke="#111" stroke-width="1.1"/>
<ellipse cx="1498.5" cy="297.8" rx="5.1" ry="4.7" fill="#703060" stroke="#111" stroke-width="1.1"/>
<ellipse cx="1508.0" cy="323.4" rx="5.1" ry="4.7" fill="#d010d0" stroke="#111" stroke-width="1.1"/>
<ellipse cx="1336.2" cy="394.8" rx="5.1" ry="4.7" fill="#204070" stroke="#111" stroke-width="1.1"/>
<ellipse cx="1351.9" cy="489.9" rx="5.1" ry="4.7" fill="#0000ff" stroke="#111" stroke-width="1.1"/>
</svg>
<div class="abs" style="left:1696px;top:351px;width:203px;height:138px;border:2px solid #8a8a8a;background:linear-gradient(208.5deg,rgba(0,0,0,.42) 50%,rgba(0,0,0,0) 50%),linear-gradient(90deg,#c0ff00,#ffff00 50%,#ffc000)"></div>
<canvas id="ins" class="abs" style="left:1698px;top:353px" width="203" height="138"></canvas>
<svg class="abs" style="left:0;top:0" width="1920" height="839"><ellipse cx="1778.3" cy="407.7" rx="5.3" ry="5" fill="#f0e000" stroke="#111" stroke-width="1.3"/><rect x="1792.4" y="413.8" width="16" height="16" fill="none" stroke="#f4f4f4" stroke-width="2"/></svg>
<div class="abs" style="left:1601px;top:497px;width:304px;height:53.5px;background:#333333"></div><div class="abs" style="left:1601px;top:550.5px;width:306px;height:1.5px;background:#555"></div>
<div id="cie_title" class="t" style="left:1478.6px;top:32.7px;font-size:14.5px;color:#d8d8d8;transform:scaleX(1.1429);">CIE 1976 u'v'</div>
<div id="rgb" class="t" style="left:1600.0px;top:499.0px;font-size:21px;color:#f2f2f2;transform:scaleX(1.0875);">RGB Triplet: 255, 255, 0</div>
<div id="dE" class="t" style="left:1653.0px;top:525.6px;font-size:21px;color:#f2f2f2;transform:scaleX(1.1010);">deltaE: 1,6</div>
<div class="abs" style="left:17px;top:602px;width:1903px;height:222px;background:#000"></div>
<div class="sw" style="left:37.0px;background:linear-gradient(#f5fdff 0 50%, #fdfdfd 50% 100%)"></div>
<div class="t c swl" style="left:30.5px;top:789.0px">White</div>
<div class="sw" style="left:115.3px;background:linear-gradient(#353537 0 50%, #353535 50% 100%)"></div>
<div class="t c swl" style="left:108.8px;top:789.0px">8K</div>
<div class="sw" style="left:193.5px;background:linear-gradient(#686b6b 0 50%, #6a6a6a 50% 100%)"></div>
<div class="t c swl" style="left:187.0px;top:789.0px">7K</div>
<div class="sw" style="left:271.8px;background:linear-gradient(#a5aaaa 0 50%, #a9a9a9 50% 100%)"></div>
<div class="t c swl" style="left:265.3px;top:789.0px">6K</div>
<div class="sw" style="left:350.0px;background:linear-gradient(#d5dce0 0 50%, #dcdcdc 50% 100%)"></div>
<div class="t c swl" style="left:343.5px;top:789.0px">6J</div>
<div class="sw" style="left:428.3px;background:linear-gradient(#2b2c2c 0 50%, #2d2d2d 50% 100%)"></div>
<div class="t c swl" style="left:421.8px;top:789.0px">5J</div>
<div class="sw" style="left:506.6px;background:linear-gradient(#b4b7bb 0 50%, #b9b9b9 50% 100%)"></div>
<div class="t c swl" style="left:500.1px;top:789.0px">6I</div>
<div class="sw" style="left:584.8px;background:linear-gradient(#4f5354 0 50%, #555555 50% 100%)"></div>
<div class="t c swl" style="left:578.3px;top:789.0px">5I</div>
<div class="sw" style="left:663.1px;background:linear-gradient(#8b8f8f 0 50%, #909090 50% 100%)"></div>
<div class="t c swl" style="left:656.6px;top:789.0px">6H</div>
<div class="sw" style="left:741.3px;background:linear-gradient(#737676 0 50%, #787878 50% 100%)"></div>
<div class="t c swl" style="left:734.8px;top:789.0px">5H</div>
<div class="sw" style="left:819.6px;background:linear-gradient(#5d6162 0 50%, #626262 50% 100%)"></div>
<div class="t c swl" style="left:813.1px;top:789.0px">6G</div>
<div class="sw" style="left:897.9px;background:linear-gradient(#999d9d 0 50%, #9e9e9e 50% 100%)"></div>
<div class="t c swl" style="left:891.4px;top:789.0px">5G</div>
<div class="sw" style="left:976.1px;background:linear-gradient(#4a4e4f 0 50%, #4e4e4e 50% 100%)"></div>
<div class="t c swl" style="left:969.6px;top:789.0px">6F</div>
<div class="sw" style="left:1054.4px;background:linear-gradient(#c0c7c6 0 50%, #c5c5c5 50% 100%)"></div>
<div class="t c swl" style="left:1047.9px;top:789.0px">5F</div>
<div class="sw" style="left:1132.6px;background:linear-gradient(#040407 0 50%, #000000 50% 100%)"></div>
<div class="t c swl" style="left:1126.1px;top:789.0px">Black</div>
<div class="sw" style="left:1210.9px;background:linear-gradient(#8f1c53 0 50%, #911e53 50% 100%)"></div>
<div class="t c swl" style="left:1204.4px;top:789.0px">2B</div>
<div class="sw" style="left:1289.2px;background:linear-gradient(#472d47 0 50%, #4b2e4a 50% 100%)"></div>
<div class="t c swl" style="left:1282.7px;top:789.0px">2C</div>
<div class="sw" style="left:1367.4px;background:linear-gradient(#d6d3c6 0 50%, #dbd3c3 50% 100%)"></div>
<div class="t c swl" style="left:1360.9px;top:789.0px">2D</div>
<div class="sw" style="left:1445.7px;background:linear-gradient(#6f4025 0 50%, #714026 50% 100%)"></div>
<div class="t c swl" style="left:1439.2px;top:789.0px">2E</div>
<div class="sw" style="left:1523.9px;background:linear-gradient(#c98b6a 0 50%, #cd8b6a 50% 100%)"></div>
<div class="t c swl" style="left:1517.4px;top:789.0px">2F</div>
<div class="sw" style="left:1602.2px;background:linear-gradient(#587085 0 50%, #5b6f84 50% 100%)"></div>
<div class="t c swl" style="left:1595.7px;top:789.0px">2G</div>
<div class="sw" style="left:1680.5px;background:linear-gradient(#506421 0 50%, #566126 50% 100%)"></div>
<div class="t c swl" style="left:1674.0px;top:789.0px">2H</div>
<div class="sw" style="left:1758.7px;background:linear-gradient(#807a98 0 50%, #827994 50% 100%)"></div>
<div class="t c swl" style="left:1752.2px;top:789.0px">2I</div>
<div class="sw" style="left:1837.0px;background:linear-gradient(#6bb793 0 50%, #6db793 50% 100%)"></div>
<div class="t c swl" style="left:1830.5px;top:789.0px">2J</div>
<div class="sw" style="left:1915.2px;background:#e0b090"></div>
<div class="t" style="left:20px;top:668px;font-size:13px;color:#f4f4f4;-webkit-text-stroke:0.4px #f4f4f4;transform:rotate(-90deg);transform-origin:0 0">Actual</div>
<div class="t" style="left:20px;top:765px;font-size:13px;color:#f4f4f4;-webkit-text-stroke:0.4px #f4f4f4;transform:rotate(-90deg);transform-origin:0 0">Target</div>
<div class="abs" style="left:17px;top:824px;width:1903px;height:15px;background:#636363"></div>
<div class="abs" style="left:38px;top:826px;width:439px;height:13px;border-radius:7px 7px 0 0;background:#474747"></div>
<div class="abs" style="left:18px;top:825px;width:17px;height:14px;border-radius:3px;background:#8a8a8a"></div>
<div class="abs" style="left:22px;top:828px;width:0;height:0;border-top:5px solid transparent;border-bottom:5px solid transparent;border-right:6px solid #4a4a4a"></div>
<div class="abs" style="left:1902px;top:825px;width:16px;height:14px;border-radius:3px;background:#6e6e6e"></div>
<div class="abs" style="left:1907px;top:828px;width:0;height:0;border-top:5px solid transparent;border-bottom:5px solid transparent;border-left:6px solid #4a4a4a"></div>
<script>
(function(){
var L=[[.1741,.0050],[.1740,.0050],[.1738,.0049],[.1736,.0049],[.1733,.0048],[.1730,.0048],[.1726,.0048],[.1721,.0048],[.1714,.0051],[.1703,.0058],[.1689,.0069],[.1669,.0086],[.1644,.0109],[.1611,.0138],[.1566,.0177],[.1510,.0227],[.1440,.0297],[.1355,.0399],[.1241,.0578],[.1096,.0868],[.0913,.1327],[.0687,.2007],[.0454,.2950],[.0235,.4127],[.0082,.5384],[.0039,.6548],[.0139,.7502],[.0389,.8120],[.0743,.8338],[.1142,.8262],[.1547,.8059],[.1929,.7816],[.2296,.7543],[.2658,.7243],[.3016,.6923],[.3373,.6589],[.3731,.6245],[.4087,.5896],[.4441,.5547],[.4788,.5202],[.5125,.4866],[.5448,.4544],[.5752,.4242],[.6029,.3965],[.6270,.3725],[.6482,.3514],[.6658,.3340],[.6801,.3197],[.6915,.3083],[.7006,.2993],[.7079,.2920],[.7140,.2859],[.7219,.2809],[.7230,.2770],[.7260,.2740],[.7283,.2717],[.7300,.2700],[.7311,.2689],[.7320,.2680],[.7327,.2673],[.7334,.2666],[.7340,.2660],[.7344,.2656],[.7346,.2654],[.7347,.2653]];
var GAM=1.0,DARK=0.66,SHX=-1,SHY=-1;var OX=1188,OY=52,SX=1305.7,SY=995.5,U0=0.05,V0=0.1,X0=1187.4,Y0=550.75;
function col(u,v,dark){
  var d=6*u-16*v+12, x=9*u/d, y=4*v/d;
  var X=x/y, Z=(1-x-y)/y, Y=1;
  var r=3.2406*X-1.5372*Y-0.4986*Z, g=-0.9689*X+1.8758*Y+0.0415*Z, b=0.0557*X-0.2040*Y+1.0570*Z;
  var inside = r>=0&&g>=0&&b>=0;
  if(r<0)r=0; if(g<0)g=0; if(b<0)b=0;
  var m=Math.max(r,g,b); r/=m; g/=m; b/=m;
  function gm(c){return c<=0.0031308?12.92*c:1.055*Math.pow(c,1/2.4)-0.055;}
  r=Math.pow(r,GAM); g=Math.pow(g,GAM); b=Math.pow(b,GAM);
  var k = inside?1:dark;
  return [r*255*k,g*255*k,b*255*k];
}
var cv=document.getElementById('gam');
if(cv&&cv.getContext){
  var W=cv.width,H=cv.height, ctx=cv.getContext('2d');
  var offB=document.createElement('canvas'); offB.width=W; offB.height=H;
  var offD=document.createElement('canvas'); offD.width=W; offD.height=H;
  var ob=offB.getContext('2d'), od=offD.getContext('2d');
  var imB=ob.createImageData(W,H), imD=od.createImageData(W,H), DB=imB.data, DD=imD.data;
  for(var j=0;j<H;j++){
    var v=V0+(Y0-(OY+j+0.5-SHY))/SY;
    for(var i=0;i<W;i++){
      var u=U0+(OX+i+0.5-SHX-X0)/SX;
      var c=col(u,v,1), p=(j*W+i)*4;
      DB[p]=c[0];DB[p+1]=c[1];DB[p+2]=c[2];DB[p+3]=255;
      DD[p]=c[0]*DARK;DD[p+1]=c[1]*DARK;DD[p+2]=c[2]*DARK;DD[p+3]=255;
    }
  }
  ob.putImageData(imB,0,0); od.putImageData(imD,0,0);
  function P(x,y){var d=-2*x+12*y+3,u=4*x/d,vv=9*y/d;return [X0+(u-U0)*SX-OX+SHX, Y0-(vv-V0)*SY-OY+SHY];}
  ctx.save();
  ctx.beginPath();
  for(var k=0;k<L.length;k++){var q=P(L[k][0],L[k][1]); if(k==0)ctx.moveTo(q[0],q[1]); else ctx.lineTo(q[0],q[1]);}
  ctx.closePath(); ctx.clip();
  ctx.drawImage(offD,0,0);
  ctx.beginPath();
  var T=[[.64,.33],[.30,.60],[.15,.06]];
  for(var k=0;k<3;k++){var q=P(T[k][0],T[k][1]); if(k==0)ctx.moveTo(q[0],q[1]); else ctx.lineTo(q[0],q[1]);}
  ctx.closePath(); ctx.clip();
  ctx.drawImage(offB,0,0);
  ctx.restore();
  var fb=document.getElementById('gamfb'); if(fb) fb.style.display='none';
}
var ci=document.getElementById('ins');
if(ci&&ci.getContext){
  var W2=ci.width,H2=ci.height,c2=ci.getContext('2d'),im2=c2.createImageData(W2,H2),D2=im2.data;
  var x0=0.4193,y0=0.5053,px0=1800.4-1698,py0=421.8-353,sx=4100,sy=2800;
  for(var j=0;j<H2;j++){
    var yy=y0-(j+0.5-py0)/sy;
    for(var i=0;i<W2;i++){
      var xx=x0+(i+0.5-px0)/sx;
      var dd=-2*xx+12*yy+3, u=4*xx/dd, v=9*yy/dd;
      var c=col(u,v,0.6),p=(j*W2+i)*4;
      D2[p]=c[0];D2[p+1]=c[1];D2[p+2]=c[2];D2[p+3]=255;
    }
  }
  c2.putImageData(im2,0,0);
}
})();

</script>
</body></html>
